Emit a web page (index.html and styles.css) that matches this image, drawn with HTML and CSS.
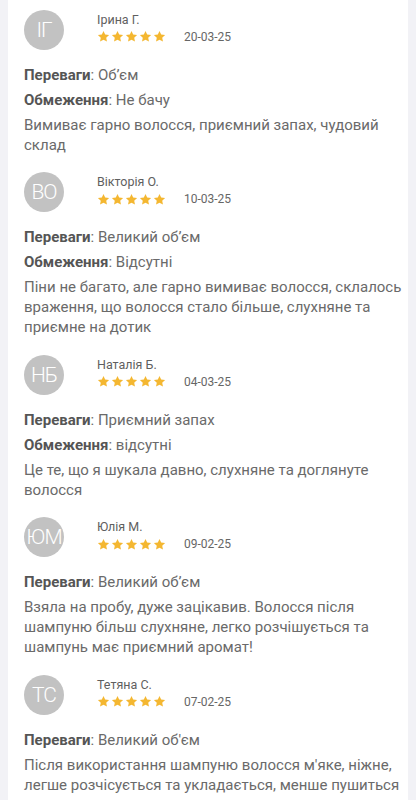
FILE: index.html
```html
<!DOCTYPE html>
<html lang="uk">
<head>
<meta charset="utf-8">
<link rel="stylesheet" href="styles.css">
</head>
<body>
<svg width="0" height="0" class="defs">
  <defs>
    <symbol id="star" viewBox="0 0 24 24"><path d="M12 1.8l3.1 6.6 7.2.9-5.3 5 1.4 7.1L12 17.9l-6.4 3.5 1.4-7.1-5.3-5 7.2-.9z"/></symbol>
  </defs>
</svg>
<div class="card">

  <div class="review">
    <div class="head">
      <div class="avatar">ІГ</div>
      <div class="meta">
        <div class="name">Ірина Г.</div>
        <div class="rating">
          <span class="stars"><svg><use href="#star"/></svg><svg><use href="#star"/></svg><svg><use href="#star"/></svg><svg><use href="#star"/></svg><svg><use href="#star"/></svg></span>
          <span class="date">20-03-25</span>
        </div>
      </div>
    </div>
    <div class="body">
      <p><b>Переваги</b>: Об’єм</p>
      <p><b>Обмеження</b>: Не бачу</p>
      <p>Вимиває гарно волосся, приємний запах, чудовий<br>склад</p>
    </div>
  </div>

  <div class="review">
    <div class="head">
      <div class="avatar">ВО</div>
      <div class="meta">
        <div class="name">Вікторія О.</div>
        <div class="rating">
          <span class="stars"><svg><use href="#star"/></svg><svg><use href="#star"/></svg><svg><use href="#star"/></svg><svg><use href="#star"/></svg><svg><use href="#star"/></svg></span>
          <span class="date">10-03-25</span>
        </div>
      </div>
    </div>
    <div class="body">
      <p><b>Переваги</b>: Великий об’єм</p>
      <p><b>Обмеження</b>: Відсутні</p>
      <p>Піни не багато, але гарно вимиває волосся, склалось<br>враження, що волосся стало більше, слухняне та<br>приємне на дотик</p>
    </div>
  </div>

  <div class="review">
    <div class="head">
      <div class="avatar">НБ</div>
      <div class="meta">
        <div class="name">Наталія Б.</div>
        <div class="rating">
          <span class="stars"><svg><use href="#star"/></svg><svg><use href="#star"/></svg><svg><use href="#star"/></svg><svg><use href="#star"/></svg><svg><use href="#star"/></svg></span>
          <span class="date">04-03-25</span>
        </div>
      </div>
    </div>
    <div class="body">
      <p><b>Переваги</b>: Приємний запах</p>
      <p><b>Обмеження</b>: відсутні</p>
      <p>Це те, що я шукала давно, слухняне та доглянуте<br>волосся</p>
    </div>
  </div>

  <div class="review">
    <div class="head">
      <div class="avatar">ЮМ</div>
      <div class="meta">
        <div class="name">Юлія М.</div>
        <div class="rating">
          <span class="stars"><svg><use href="#star"/></svg><svg><use href="#star"/></svg><svg><use href="#star"/></svg><svg><use href="#star"/></svg><svg><use href="#star"/></svg></span>
          <span class="date">09-02-25</span>
        </div>
      </div>
    </div>
    <div class="body">
      <p><b>Переваги</b>: Великий об’єм</p>
      <p>Взяла на пробу, дуже зацікавив. Волосся після<br>шампуню більш слухняне, легко розчішується та<br>шампунь має приємний аромат!</p>
    </div>
  </div>

  <div class="review">
    <div class="head">
      <div class="avatar">ТС</div>
      <div class="meta">
        <div class="name">Тетяна С.</div>
        <div class="rating">
          <span class="stars"><svg><use href="#star"/></svg><svg><use href="#star"/></svg><svg><use href="#star"/></svg><svg><use href="#star"/></svg><svg><use href="#star"/></svg></span>
          <span class="date">07-02-25</span>
        </div>
      </div>
    </div>
    <div class="body">
      <p><b>Переваги</b>: Великий об'єм</p>
      <p>Після використання шампуню волосся м'яке, ніжне,<br>легше розчісується та укладається, менше пушиться</p>
    </div>
  </div>

</div>
</body>
</html>
```

FILE: styles.css
```css
html, body {
  margin: 0;
  padding: 0;
}
body {
  background: #f2f2f6;
  font-family: Roboto, "Noto Sans", sans-serif;
  color: #666;
  height: 800px;
  overflow: hidden;
}
.defs {
  position: absolute;
}
.card {
  background: #fff;
  margin: 0 8px;
  padding: 9.5px 8px 40px 16px;
  display: flex;
  flex-direction: column;
  gap: 12.5px;
}
.head {
  display: flex;
  align-items: flex-start;
  height: 40px;
}
.avatar {
  width: 40px;
  height: 40px;
  border-radius: 50%;
  background: #c2c2c2;
  color: #fff;
  font-size: 21px;
  font-weight: 300;
  display: flex;
  align-items: center;
  justify-content: center;
  letter-spacing: -1px;
  flex: none;
}
.meta {
  margin-left: 33px;
  padding-top: 2px;
}
.name {
  font-size: 12.5px;
  line-height: 16px;
  color: #5f5f5f;
}
.rating {
  display: flex;
  align-items: center;
  margin-top: 1px;
  height: 16px;
}
.stars {
  display: flex;
  gap: 1px;
}
.stars svg {
  width: 13px;
  height: 13px;
  fill: #f4b731;
}
.date {
  margin-left: 18px;
  font-size: 12px;
  color: #666;
}
.body {
  margin-top: 15px;
}
.body p {
  margin: 0 0 5px;
  font-size: 15px;
  line-height: 20px;
  color: #6a6a6a;
  white-space: nowrap;
}
.body b {
  color: #555;
  font-weight: 700;
}
```
